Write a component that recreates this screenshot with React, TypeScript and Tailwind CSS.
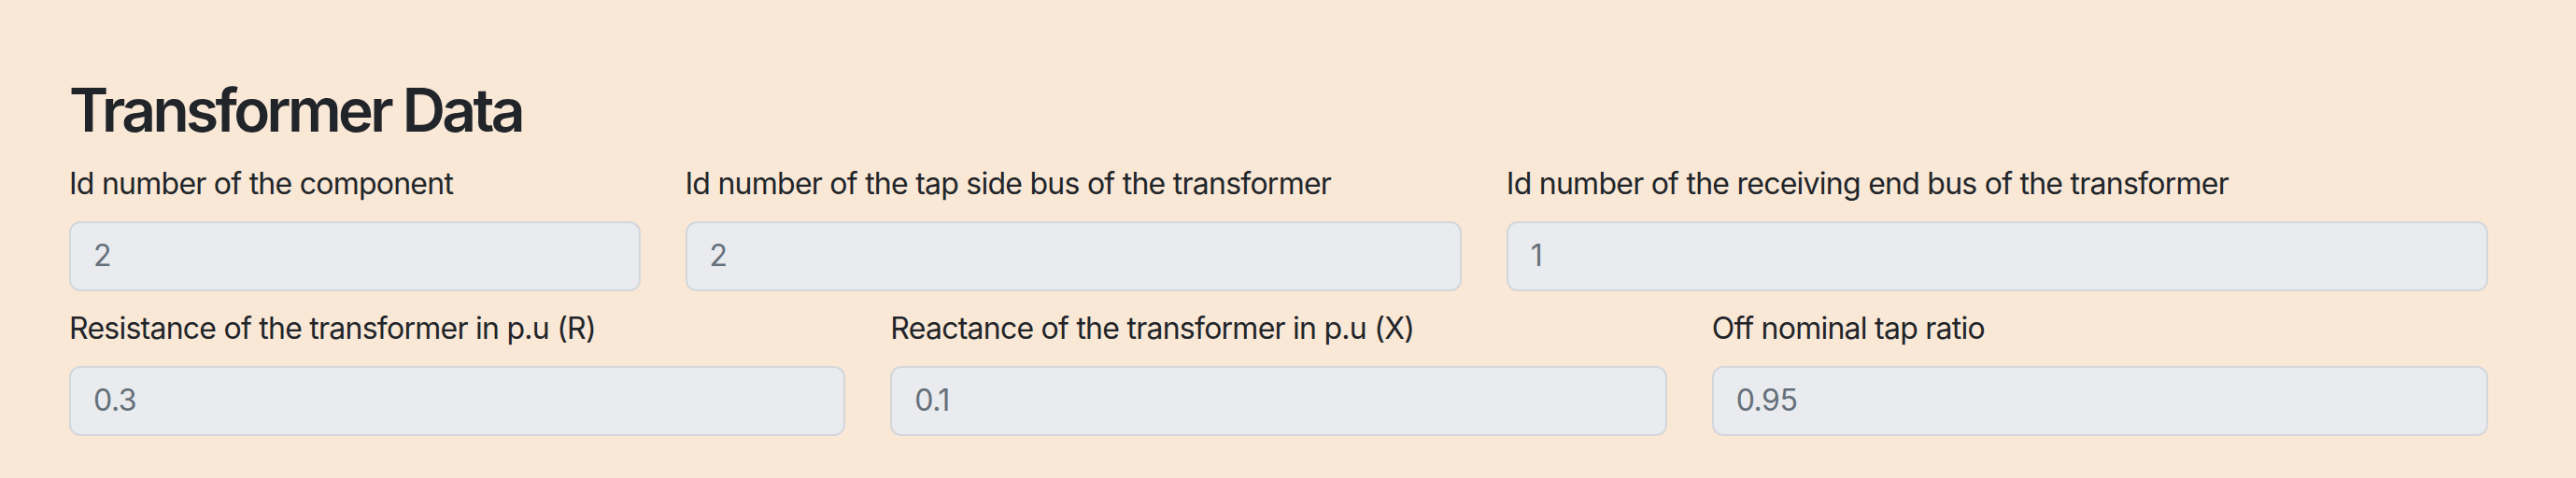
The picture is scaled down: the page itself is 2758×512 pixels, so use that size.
import React from "react";

const font = { fontFamily: 'Inter, "Noto Sans", sans-serif' };

function Field({ label, value, span }: { label: string; value: string; span: string }) {
  return (
    <div className={span}>
      <label className="block text-[32px] leading-[48px] tracking-[-0.75px] text-[#212529] mb-[16px] whitespace-nowrap">{label}</label>
      <div className="h-[75px] rounded-[12px] border-2 border-[#d3d7dc] bg-[#e9ebee] px-[24px] flex items-center text-[32px] tracking-[-0.5px] text-[#65707a]">
        {value}
      </div>
    </div>
  );
}

export default function App() {
  return (
    <div className="min-h-[512px] w-full bg-[#fae8d7] pl-[74px] pr-[94px] pt-[80px]" style={font}>
      <h2 className="text-[64px] leading-[76.8px] font-semibold tracking-[-3.6px] text-[#212529] mb-[16px]">Transformer Data</h2>
      <div className="grid grid-cols-12 gap-x-[48px] gap-y-[16px]">
        <Field span="col-span-3" label="Id number of the component" value="2" />
        <Field span="col-span-4" label="Id number of the tap side bus of the transformer" value="2" />
        <Field span="col-span-5" label="Id number of the receiving end bus of the transformer" value="1" />
        <Field span="col-span-4" label="Resistance of the transformer in p.u (R)" value="0.3" />
        <Field span="col-span-4" label="Reactance of the transformer in p.u (X)" value="0.1" />
        <Field span="col-span-4" label="Off nominal tap ratio" value="0.95" />
      </div>
    </div>
  );
}
